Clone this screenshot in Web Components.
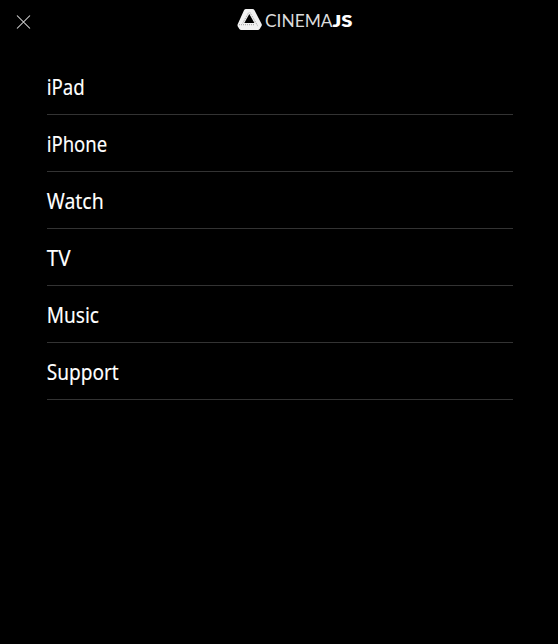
<!DOCTYPE html>
<html lang="en"><head><meta charset="utf-8"><title>CinemaJS</title>
<style>html,body{margin:0;background:#000}</style></head><body>
<cinema-menu></cinema-menu>
<script>
customElements.define('close-button', class extends HTMLElement {
  constructor(){ super(); this.attachShadow({mode:'open'}).innerHTML = `
<style>:host{display:block;width:15px;height:15px}svg{display:block}</style>
<svg width="15" height="15" viewBox="0 0 15 15" fill="none" stroke="#ddd" stroke-width="1.05"><path d="M1 .5 14 13.500M14 .5 1 13.500"/></svg>`; }
});
customElements.define('brand-logo', class extends HTMLElement {
  constructor(){ super(); this.attachShadow({mode:'open'}).innerHTML = `
<style>:host{display:block;width:120px;height:26px}svg{display:block}
text{font-family:Lato,"Liberation Sans",sans-serif;font-size:16.500px;fill:#dcdcdc}.b{font-weight:800;fill:#fff}</style>
<svg width="120" height="26" viewBox="0 0 120 26">
<path d="M10 2h6.500q1.300 0 2 1.200l7 13.600q.7 1.200 0 2.300l-1.800 3q-.6 1-1.800 1H5.200q-1.200 0-1.800-1L1.800 19.400q-.6-1.200 0-2.400L8 3.300Q8.700 2 10 2Z" fill="#f2f2f2"/>
<path d="M13.300 7 18.400 16H8.300Z" fill="#000"/>
<g fill="none" stroke="#666" stroke-width=".6" stroke-dasharray="1 1"><path d="M14 5.500 22 19.500M3 17.700H19M12.500 5.800 6.500 16.500"/></g>
<text x="29" y="19.600" textLength="67.500" lengthAdjust="spacingAndGlyphs">CINEMA</text>
<text class="b" x="96.500" y="19.600" textLength="20" lengthAdjust="spacingAndGlyphs">JS</text>
</svg>`; }
});
customElements.define('menu-item', class extends HTMLElement {
  connectedCallback(){ this.attachShadow({mode:'open'}).innerHTML = `
<style>:host{display:block;box-sizing:border-box;height:57px;border-bottom:1px solid #333}
svg{display:block;overflow:visible}text{font:21px "Noto Sans",sans-serif;fill:#fff;stroke:#fff;stroke-width:.12px}</style>
<svg width="120" height="56"><text x="-.3" y="37.200" textLength="${this.getAttribute('advance')}" lengthAdjust="spacingAndGlyphs">${this.getAttribute('label')}</text></svg>`; }
});
customElements.define('cinema-menu', class extends HTMLElement {
  constructor(){ super(); this.attachShadow({mode:'open'}).innerHTML = `
<style>:host{display:block;height:644px;background:#000;overflow:hidden}
header{display:grid;grid-template-columns:221px 1fr;height:58px;box-sizing:border-box}
close-button{margin:15px 0 0 16px}brand-logo{margin:7px 0 0 15px}
nav{margin:0 45px 0 47px}</style>
<header><close-button></close-button><brand-logo></brand-logo></header>
<nav><menu-item label="iPad" advance="38"></menu-item><menu-item label="iPhone" advance="60.500"></menu-item><menu-item label="Watch" advance="57"></menu-item><menu-item label="TV" advance="23.800"></menu-item><menu-item label="Music" advance="52.300"></menu-item><menu-item label="Support" advance="72"></menu-item></nav>`; }
});
</script></body></html>
